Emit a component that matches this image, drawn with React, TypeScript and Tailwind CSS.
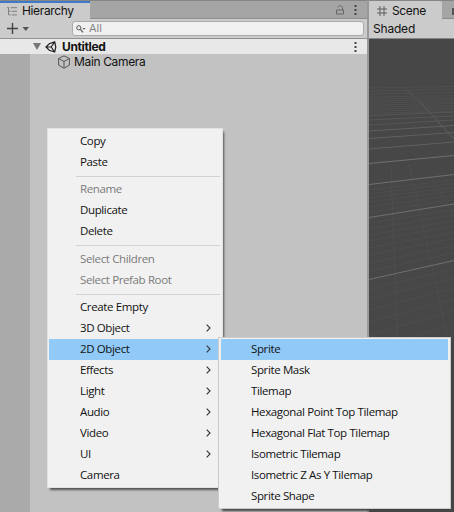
import React from "react";

type Item = { label: string; disabled?: boolean; arrow?: boolean; active?: boolean };

const groups: Item[][] = [
  [{ label: "Copy" }, { label: "Paste" }],
  [{ label: "Rename", disabled: true }, { label: "Duplicate" }, { label: "Delete" }],
  [{ label: "Select Children", disabled: true }, { label: "Select Prefab Root", disabled: true }],
  [
    { label: "Create Empty" },
    { label: "3D Object", arrow: true },
    { label: "2D Object", arrow: true, active: true },
    { label: "Effects", arrow: true },
    { label: "Light", arrow: true },
    { label: "Audio", arrow: true },
    { label: "Video", arrow: true },
    { label: "UI", arrow: true },
    { label: "Camera" },
  ],
];

const separators = ["h-[6px]", "h-[7px] pb-px", "h-[6px]"];

const subItems: Item[] = [
  { label: "Sprite", active: true },
  { label: "Sprite Mask" },
  { label: "Tilemap" },
  { label: "Hexagonal Point Top Tilemap" },
  { label: "Hexagonal Flat Top Tilemap" },
  { label: "Isometric Tilemap" },
  { label: "Isometric Z As Y Tilemap" },
  { label: "Sprite Shape" },
];

function MenuRow({ item }: { item: Item }) {
  return (
    <div
      className={`flex h-[21px] items-center justify-between pb-[2px] pr-[10px] ${item.active ? "bg-[#91c9f7]" : ""} ${item.disabled ? "text-[#7b7b7b]" : "text-[#111]"}`}
    >
      <span className="whitespace-nowrap">{item.label}</span>
      {item.arrow && (
        <svg width="5" height="8" viewBox="0 0 5 8" fill="none" stroke="#333" strokeWidth="1.1">
          <path d="M0.7 0.7 4 4 0.7 7.3" />
        </svg>
      )}
    </div>
  );
}

function Kebab() {
  return (
    <svg width="3" height="10" viewBox="0 0 3 10" fill="#444">
      <rect x="0.5" y="0" width="2" height="2" />
      <rect x="0.5" y="4" width="2" height="2" />
      <rect x="0.5" y="8" width="2" height="2" />
    </svg>
  );
}

const majorLines = [
  [115.5, 112],
  [120, 116],
  [125, 120],
  [131, 125.5],
  [138.5, 132.5],
  [149, 142],
  [163.5, 155.5],
  [184.5, 174.5],
  [217.5, 204],
  [279.5, 260.5],
];
const farLines = [88, 91, 94, 97, 99, 101, 103, 105, 107, 109, 111, 113];
const minorLines = [190, 194, 198, 202, 207, 212, 223, 229, 235, 241, 248, 255, 263, 271, 289, 299, 310, 322, 335, 350];

function SceneGrid() {
  return (
    <svg className="block h-[473px] w-[85px]" viewBox="369 39 85 473" fill="none">
      <g stroke="#505050" strokeWidth="0.8">
        {farLines.map((y) => <path key={y} d={`M369 ${y}L454 ${y - 1.5}`} />)}
      </g>
      <g stroke="#4f4f4f" strokeWidth="0.8">
        {minorLines.map((y) => <path key={y} d={`M369 ${y}L454 ${y - 10 - (y - 190) * 0.1}`} />)}
        <path d="M391 165L392.5 213 395 274 397.5 340M409 164L424 230 448 340M433 180L454 216M369 92L378 86" />
      </g>
      <path d="M404 88L420 102" stroke="#555" strokeWidth="0.8" />
      <path d="M420 102L454 139" stroke="#656565" strokeWidth="0.8" />
      {majorLines.map(([a, b], i) => (
        <path key={a} d={`M369 ${a}L454 ${b}`} stroke={i < 3 ? "#575757" : i < 6 ? "#606060" : "#707070"} strokeWidth="1" />
      ))}
    </svg>
  );
}

export default function App() {
  return (
    <div className="relative flex h-[512px] w-[454px] overflow-hidden bg-[#c2c2c2] font-['Inter',sans-serif] text-[12px] leading-none tracking-[-0.35px] text-[#111]">
      <section className="flex w-[369px] shrink-0 flex-col border-r-2 border-[#999]">
        <div className="flex h-[19px] border-t border-[#858585] bg-[#a5a5a5]">
          <div className="flex w-[90px] items-center border-t-2 border-[#3d7bc8] bg-[#cbcbcb] pl-[7px]">
            <svg width="10" height="9" viewBox="0 0 10 9" stroke="#777" fill="none">
              <path d="M0 .7h2M3.5 .7H10M2 4.3h1.5M4.5 4.3H10M2 7.9h1.5M4.5 7.9H10M1.5 1V8" strokeWidth="0.9" />
            </svg>
            <span className="ml-[5px]">Hierarchy</span>
          </div>
          <div className="flex flex-1 items-center justify-end gap-[10px] border-b border-[#8e8e8e] pr-[10px]">
            <svg width="8" height="10" viewBox="0 0 8 10" fill="none" stroke="#666">
              <path d="M.5 5h7v4h-7zM6.5 5V2.5C6.5.2 2 .2 2 2.5" />
            </svg>
            <Kebab />
          </div>
        </div>
        <div className="flex h-[20px] items-center border-b border-[#929292] bg-[#cbcbcb] pl-[7px] pr-[3px]">
          <svg width="22" height="11" viewBox="0 0 22 11" fill="none">
            <path d="M5.5 0v11M0 5.5h11" stroke="#444" strokeWidth="1.4" />
            <path d="M15.5 4h6.5l-3.2 4z" fill="#555" />
          </svg>
          <div className="ml-[43px] flex h-[15px] flex-1 items-center rounded-[3px] border border-[#aaa] bg-[#f0f0f0] pl-[3px] text-[11px] tracking-normal text-[#858585]">
            <svg width="10" height="8" viewBox="0 0 10 8" fill="none" stroke="#555">
              <circle cx="2.8" cy="2.8" r="2.1" />
              <path d="M4.4 4.4 7 7.3" strokeWidth="1.2" />
              <path d="M6.5 3h3L8 4.8z" fill="#555" stroke="none" />
            </svg>
            <span className="ml-[3px]">All</span>
          </div>
        </div>
        <div className="flex h-[15px] items-center bg-[#e8e8e8] pl-[33px] pr-[10px]">
          <svg width="8" height="7" viewBox="0 0 8 7"><path d="M0 0h8L4 7z" fill="#777" /></svg>
          <svg className="ml-[4px]" width="12" height="12" viewBox="0 0 12 12" fill="none" stroke="#222" strokeWidth="1.2">
            <path d="M1 6 4.3 2.8 9.7.9 10.8 6 9.7 11 4.3 9.2zM1 6h5.2M6.2 6 9.6 1M6.2 6 9.6 11" />
          </svg>
          <span className="ml-[5px] flex-1 font-bold">Untitled</span>
          <Kebab />
        </div>
        <div className="flex flex-1">
          <div className="w-[30px] bg-[#aaa]" />
          <div className="flex h-[16px] flex-1 items-center pl-[28px]">
            <svg width="12" height="14" viewBox="0 0 12 14" fill="none" stroke="#555">
              <path d="M6 .8 11.4 3.6V10.2L6 13.2.6 10.2V3.6zM.6 3.6 6 6.5l5.4-2.9M6 6.5v6.7" />
            </svg>
            <span className="ml-[4px]">Main Camera</span>
          </div>
        </div>
      </section>

      <section className="w-[85px] shrink-0 bg-[#474747]">
        <div className="flex h-[19px] border-t border-[#858585] bg-[#a5a5a5]">
          <div className="flex w-[73px] items-center rounded-tr-[2px] bg-[#cbcbcb] pl-[8px] pt-[2px]">
            <svg width="10" height="10" viewBox="0 0 10 10" stroke="#555" fill="none">
              <path d="M3 0v10M7 0v10M0 3h10M0 7h10" strokeWidth="0.9" />
            </svg>
            <span className="ml-[5px]">Scene</span>
          </div>
          <div className="flex flex-1 items-end justify-end border-b border-[#8e8e8e] pb-[3px]">
            <div className="h-[7px] w-[2px] bg-[#555]" />
          </div>
        </div>
        <div className="flex h-[20px] items-center border-b border-[#858585] bg-[#cbcbcb] pl-[4px] tracking-[-0.2px]">Shaded</div>
        <SceneGrid />
      </section>

      <div className="absolute left-[47px] top-[128px] h-[360px] w-[176px] border border-[#e2e2e2] bg-[#f1f1f1] px-[1px] pt-[2px] font-['Open_Sans',sans-serif] text-[11.5px] tracking-[-0.37px] shadow-[2px_3px_2px_-1px_#555] [&_span]:pl-[31px]">
        {groups.map((group, i) => (
          <React.Fragment key={i}>
            {i > 0 && (
              <div className={`flex items-center pl-[27px] pr-[1px] ${separators[i - 1]}`}>
                <div className="h-px flex-1 bg-[#d2d2d2]" />
              </div>
            )}
            {group.map((item) => <MenuRow key={item.label} item={item} />)}
          </React.Fragment>
        ))}
      </div>

      <div className="absolute left-[218px] top-[337px] h-[172px] w-[233px] border border-[#ccc] bg-[#f1f1f1] px-[2px] pt-[1px] font-['Open_Sans',sans-serif] text-[11.5px] tracking-[-0.37px] shadow-[3px_3px_2px_-1px_#444] [&_span]:pl-[30px]">
        {subItems.map((item) => <MenuRow key={item.label} item={item} />)}
      </div>
    </div>
  );
}
